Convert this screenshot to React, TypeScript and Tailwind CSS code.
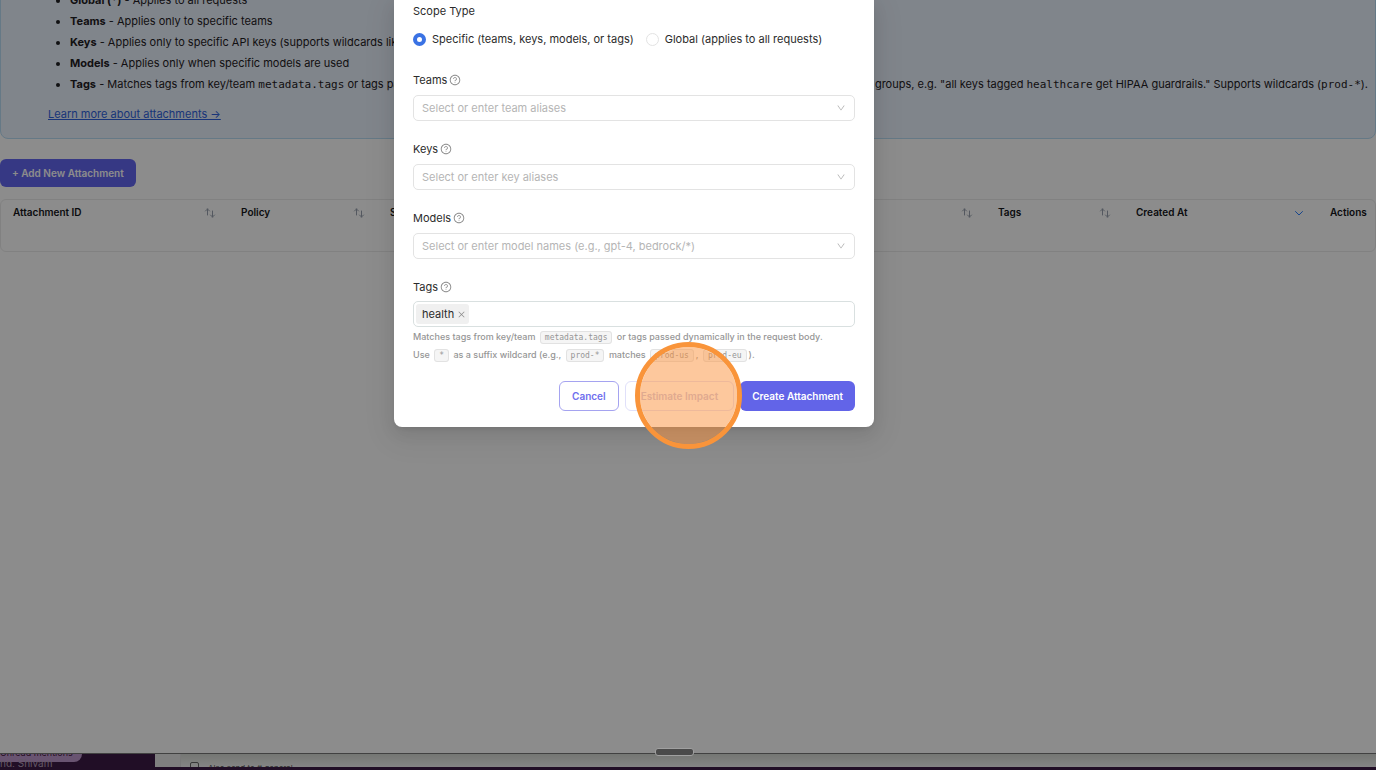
import React from "react";
import {
  AiOutlineClose,
  AiOutlineDown,
  AiOutlineQuestionCircle,
} from "react-icons/ai";

function SortIcon() {
  return (
    <svg
      className="h-3 w-3 text-gray-400"
      viewBox="0 0 24 24"
      fill="none"
      stroke="currentColor"
      strokeWidth="2"
      strokeLinecap="round"
      strokeLinejoin="round"
      aria-hidden="true"
    >
      <path d="M7 16V4m0 0L3 8m4-4l4 4m6 0v12m0 0l4-4m-4 4l-4-4" />
    </svg>
  );
}

function SortedDownIcon() {
  return (
    <svg
      className="h-3 w-3 text-blue-500"
      viewBox="0 0 24 24"
      fill="none"
      stroke="currentColor"
      strokeWidth="2"
      strokeLinecap="round"
      strokeLinejoin="round"
      aria-hidden="true"
    >
      <path d="M19 9l-7 7-7-7" />
    </svg>
  );
}

function Mono({ children }: { children: React.ReactNode }) {
  return (
    <code className="font-['DejaVu_Sans_Mono',monospace] text-[11px] leading-none">
      {children}
    </code>
  );
}

function InfoPanel() {
  return (
    <section className="-mt-[11px] rounded-b-lg border border-[#b8dcf5] bg-[#e9f2fd] pb-[14px] pl-[47px] text-[11px] text-[#1f2023]">
      <ul className="ml-[22px] list-disc leading-[21px]">
        <li>
          <strong>Global (*)</strong> - Applies to all requests
        </li>
        <li>
          <strong>Teams</strong> - Applies only to specific teams
        </li>
        <li>
          <strong>Keys</strong> - Applies only to specific API keys (supports
          wildcards like <Mono>dev-*</Mono>)
        </li>
        <li>
          <strong>Models</strong> - Applies only when specific models are used
        </li>
        <li>
          <div className="flex justify-between whitespace-nowrap pr-[7px]">
            <span>
              <strong>Tags</strong> - Matches tags from key/team{" "}
              <Mono>metadata.tags</Mono> or tags passed dynamically
            </span>
            <span>
              groups, e.g. "all keys tagged <Mono>healthcare</Mono> get HIPAA
              guardrails." Supports wildcards (<Mono>prod-*</Mono>).
            </span>
          </div>
        </li>
      </ul>
      <a
        href="#attachments"
        className="mt-[9px] block w-fit leading-5 text-[#2f62dc] underline"
      >
        Learn more about attachments →
      </a>
    </section>
  );
}

const columns = [
  { name: "Attachment ID", width: "w-[228px]", sort: "both" },
  { name: "Policy", width: "w-[149px]", sort: "both" },
  { name: "Scope", width: "w-[140px]", sort: "both" },
  { name: "Teams", width: "w-[140px]", sort: "both" },
  { name: "Keys", width: "w-[140px]", sort: "both" },
  { name: "Models", width: "w-[188px]", sort: "both" },
  { name: "Tags", width: "w-[138px]", sort: "both" },
  { name: "Created At", width: "w-[194px]", sort: "down" },
  { name: "Actions", width: "w-auto", sort: "none" },
];

function AttachmentsTable() {
  return (
    <div className="mt-3 overflow-hidden rounded-md border border-[#ececec]">
      <table className="w-full table-fixed text-left text-[10px]">
        <thead>
          <tr>
            {columns.map((c) => (
              <th
                key={c.name}
                className={`${c.width} h-[25px] pl-3 pr-[13px] font-semibold text-[#14161a]`}
              >
                <div className="flex items-center justify-between whitespace-nowrap">
                  {c.name}
                  {c.sort === "both" && <SortIcon />}
                  {c.sort === "down" && <SortedDownIcon />}
                </div>
              </th>
            ))}
          </tr>
        </thead>
        <tbody>
          <tr>
            <td colSpan={9} className="h-[26px]" />
          </tr>
        </tbody>
      </table>
    </div>
  );
}

function FieldLabel({ id, text }: { id: string; text: string }) {
  return (
    <label htmlFor={id} className="flex h-5 items-center gap-[2px]">
      {text}
      <AiOutlineQuestionCircle className="h-3 w-3 text-[#8c8c8c]" />
    </label>
  );
}

function SelectField({
  id,
  label,
  placeholder,
}: {
  id: string;
  label: string;
  placeholder: string;
}) {
  return (
    <div className="mb-[18px]">
      <FieldLabel id={id} text={label} />
      <div className="relative mt-[5px]">
        <select
          id={id}
          className="h-[26px] w-full appearance-none rounded-[5px] border border-[#e3e3e3] bg-white pl-2 pr-8 text-[#b5b5b5]"
        >
          <option>{placeholder}</option>
        </select>
        <AiOutlineDown className="pointer-events-none absolute right-[9px] top-2 h-[10px] w-[10px] text-[#b0b0b0]" />
      </div>
    </div>
  );
}

function Chip({ children }: { children: React.ReactNode }) {
  return (
    <code className="mx-[2px] rounded-[3px] border border-[#e2e2e2] bg-[#f5f5f5] px-1 py-px font-['DejaVu_Sans_Mono',monospace] text-[8px] leading-none">
      {children}
    </code>
  );
}

const radioClass =
  "h-[13px] w-[13px] appearance-none rounded-full border border-[#e3e3e3] bg-white checked:border-4 checked:border-[#3a72e4]";

function AttachmentDialog() {
  return (
    <form
      role="dialog"
      aria-label="Scope Type"
      className="w-[480px] rounded-b-lg bg-white px-[19px] pb-4 text-[11px] text-[#2b2b2b] shadow-[0_6px_16px_0_rgba(0,0,0,0.08),0_3px_6px_-4px_rgba(0,0,0,0.12),0_9px_28px_8px_rgba(0,0,0,0.05)]"
    >
      <fieldset>
        <legend className="pt-px leading-5">Scope Type</legend>
        <div className="mb-[21px] mt-2 flex h-5 items-center gap-3 whitespace-nowrap">
          <label className="flex items-center gap-[6px]">
            <input type="radio" name="scope" defaultChecked className={radioClass} />
            Specific (teams, keys, models, or tags)
          </label>
          <label className="flex items-center gap-[6px]">
            <input type="radio" name="scope" className={radioClass} />
            Global (applies to all requests)
          </label>
        </div>
      </fieldset>

      <SelectField id="teams" label="Teams" placeholder="Select or enter team aliases" />
      <SelectField id="keys" label="Keys" placeholder="Select or enter key aliases" />
      <SelectField
        id="models"
        label="Models"
        placeholder="Select or enter model names (e.g., gpt-4, bedrock/*)"
      />

      <FieldLabel id="tags" text="Tags" />
      <div className="mt-1 flex h-[26px] items-center rounded-[5px] border border-[#d9e0e0] pl-[2px] pr-2">
        <span className="flex h-5 items-center gap-[3px] rounded-[3px] bg-[#f0f0f0] pl-[6px] pr-[3px]">
          health
          <button type="button" aria-label="Remove health">
            <AiOutlineClose className="h-[9px] w-[9px] text-[#8c8c8c]" />
          </button>
        </span>
        <input id="tags" className="ml-1 min-w-0 flex-1 outline-none" />
      </div>
      <p className="pt-px text-[9px] font-medium leading-[18px] text-[#969696]">
        Matches tags from key/team <Chip>metadata.tags</Chip> or tags passed
        dynamically in the request body.
        <br />
        Use <Chip>*</Chip> as a suffix wildcard (e.g., <Chip>prod-*</Chip>{" "}
        matches <Chip>prod-us</Chip>, <Chip>prod-eu</Chip>).
      </p>

      <div className="mt-[17px] flex justify-end gap-[6px] text-[10px] font-semibold">
        <button
          type="button"
          className="h-[30px] rounded-md border border-[#a5a3f0] px-3 text-[#6f6fee]"
        >
          Cancel
        </button>
        <button
          type="button"
          disabled
          className="h-[30px] rounded-md border border-[#e0e0fa] px-[15px] text-[#c3c2e4]"
        >
          Estimate Impact
        </button>
        <button
          type="submit"
          className="h-[30px] rounded-md bg-[#6264e8] px-3 text-white"
        >
          Create Attachment
        </button>
      </div>
    </form>
  );
}

function WindowBehind() {
  return (
    <div className="flex h-[13px] overflow-hidden whitespace-nowrap text-[10px]">
      <div className="w-[155px] overflow-hidden bg-[#3d1a46] text-[#b59fb8]">
        <div className="h-2 w-[82px] overflow-hidden rounded-br-lg bg-[#c09ace] text-[9px] text-[#3f1440]">
          <span className="-mt-[7px] block leading-3">Unread mentions</span>
        </div>
        <span className="-mt-[7px] block leading-4">ng, Shivam</span>
      </div>
      <div className="w-[26px] border-r border-[#dcdcdc] bg-[#e8e8e8]" />
      <div className="flex flex-1 items-start gap-[9px] bg-linear-to-b from-[#d4d8d2] to-[#f2f2f2] pl-[9px] pt-2 text-[8px] leading-3 text-[#555]">
        <span className="h-[10px] w-[9px] rounded-xs border border-[#666]" />
        Also send to # general
      </div>
    </div>
  );
}

export default function App() {
  return (
    <div className="relative flex h-screen flex-col overflow-hidden bg-white font-[Inter,sans-serif]">
      <main className="flex-1">
        <InfoPanel />
        <button
          type="button"
          className="mt-5 block h-7 rounded-md bg-[#6366f1] px-3 text-[10px] font-semibold text-white"
        >
          + Add New Attachment
        </button>
        <AttachmentsTable />
      </main>
      <footer>
        <div className="h-px bg-[#777]" />
        <WindowBehind />
        <div className="h-[3px] bg-[#3d1a46]" />
      </footer>

      <div className="absolute inset-0 flex items-start justify-center overflow-hidden bg-black/45 pr-[108px]">
        <AttachmentDialog />
      </div>
      <div className="absolute left-[635px] top-[342px] h-[107px] w-[107px] rounded-full border-[5px] border-[#f9943a] bg-[#fb923c]/50 bg-clip-padding" />
      <div className="absolute left-[655px] top-[748px] h-2 w-[39px] rounded-[3px] border border-[#a0a0a0] bg-[#4a4a4a]" />
    </div>
  );
}
